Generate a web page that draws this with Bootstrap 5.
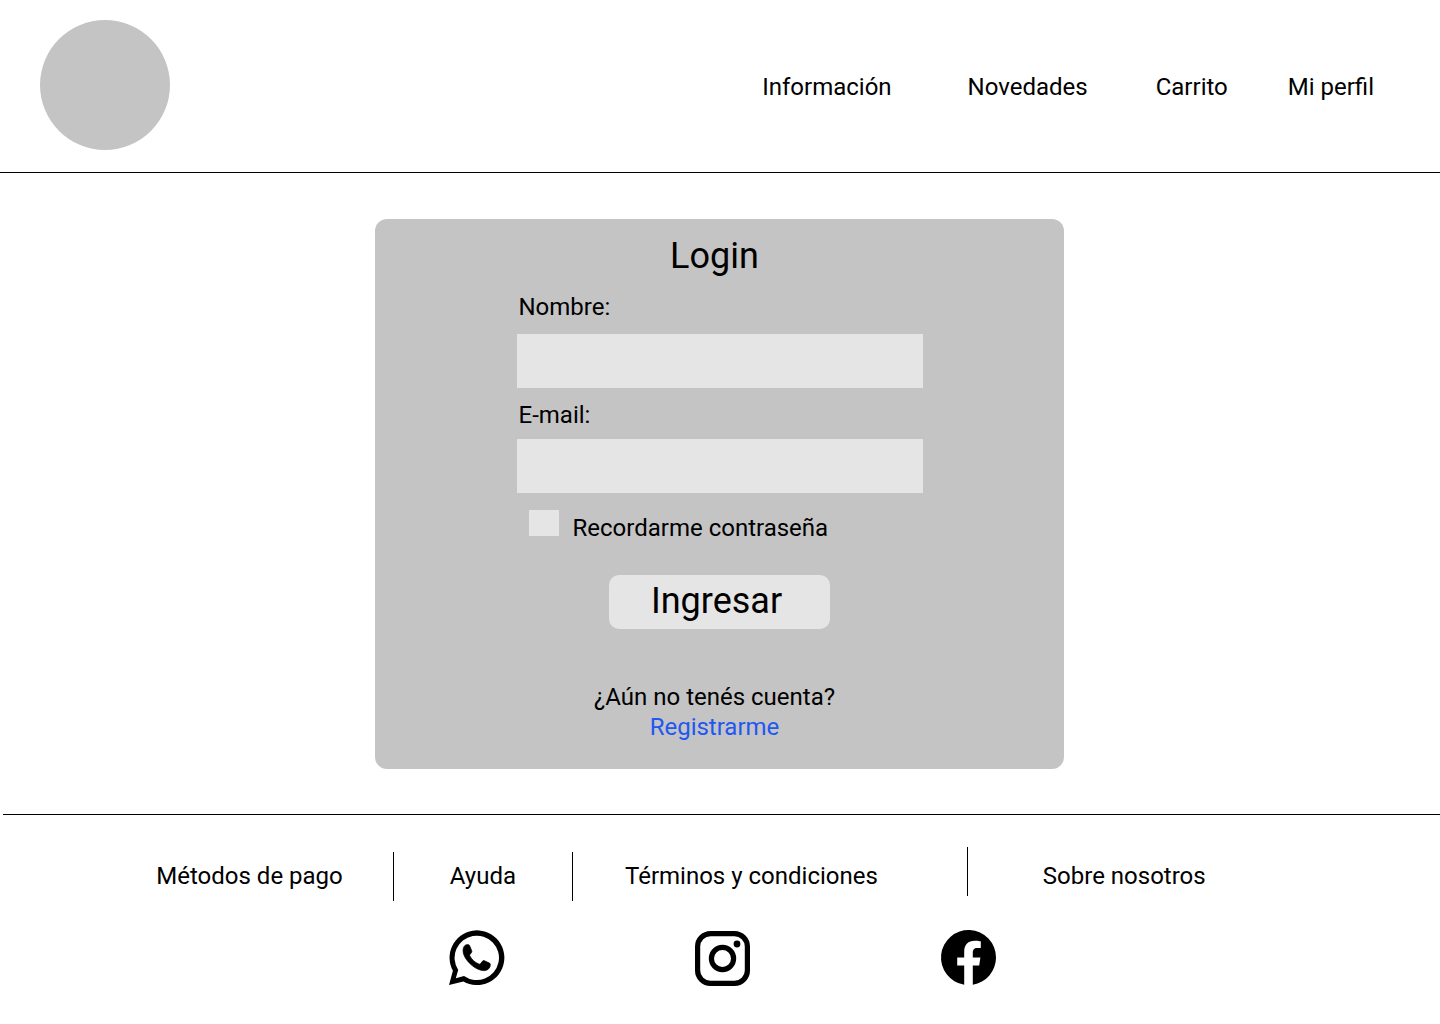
<!DOCTYPE html>
<html lang="es">
<head>
<meta charset="utf-8">
<meta name="viewport" content="width=device-width, initial-scale=1">
<title>Login</title>
<link href="https://cdn.jsdelivr.net/npm/bootstrap@5.3.0/dist/css/bootstrap.min.css" rel="stylesheet">
<style>
  body { font-family: Roboto, "Liberation Sans", sans-serif; font-size: 24px; line-height: 28px; color: #000; background: #fff; }
  a { color: #000; text-decoration: none; }
  .site-header { padding: 20px 66px 22px 40px; border-bottom: 1px solid #000; }
  .site-logo { width: 130px; height: 130px; background: #c4c4c4; }
  .site-nav { column-gap: 60px; row-gap: 8px; padding-top: 4px; }
  .login-area { padding: 46px 1px 45px 0; }
  .login-card { width: 100%; max-width: 689px; padding: 16px 0 27px; background: #c4c4c4; border-radius: 12px; }
  .login-form { width: 100%; max-width: 406px; }
  .big-text { font-size: 36px; line-height: 42px; font-weight: 400; }
  .shift-left { padding-right: 10px; }
  .field-name, .field-mail { padding-left: 2px; }
  .field-name { margin: 16px 0 13px; }
  .field-mail { margin: 13px 0 10px; }
  .field-box { height: 54px; background: #e5e5e5; border: 0; border-radius: 0; font-size: 24px; }
  .remember { gap: 14px; margin-top: 17px; padding-left: 12px; }
  .remember .form-check-input { width: 30px; height: 26px; margin: 0; border: 0; border-radius: 0; background-color: #e5e5e5; flex: none; }
  .remember .form-check-input:checked { background-color: #0d6efd; }
  .submit-btn { width: 221px; margin-top: 33px; padding: 5px 6px 7px 0; border: 0; border-radius: 10px; color: #000; background: #e5e5e5; }
  .submit-btn:hover { background: #d9d9d9; }
  .signup { margin-top: 53px; line-height: 30px; }
  .signup a { color: #2157f2; }
  .site-footer { margin-left: 3px; border-top: 1px solid #000; padding: 32px 0 38px; }
  .footer-nav { padding-right: 131px; }
  .footer-nav a { padding-top: 4px; margin: 0 50px; }
  .footer-nav a.short-link { margin: 0 56px; }
  .footer-nav a.long-link { margin: 0 89px 0 52px; }
  .footer-nav a.last-link { margin: 0 0 0 75px; }
  .footer-rule { width: 1px; height: 49px; background: #000; margin-top: 5px; }
  .footer-rule.raised { margin: 0 0 5px; }
  .social { gap: 191px; margin-top: 29px; padding-left: 2px; }
  .social svg { display: block; width: 55px; height: 55px; overflow: visible; }
</style>
<script src="https://cdn.jsdelivr.net/npm/bootstrap@5.3.0/dist/js/bootstrap.bundle.min.js"></script>
</head>
<body>
<header class="site-header d-flex flex-wrap align-items-center justify-content-between">
  <a href="#" class="site-logo rounded-circle" aria-label="Inicio"></a>
  <nav class="site-nav d-flex flex-wrap" aria-label="Principal">
    <a href="#" class="me-3">Información</a>
    <a href="#" class="me-2">Novedades</a>
    <a href="#">Carrito</a>
    <a href="#">Mi perfil</a>
  </nav>
</header>

<main class="login-area d-flex justify-content-center">
  <section class="login-card d-flex flex-column align-items-center">
    <h1 class="big-text shift-left m-0">Login</h1>
    <form class="login-form d-flex flex-column">
      <label for="nombre" class="field-name">Nombre:</label>
      <input type="text" id="nombre" class="form-control field-box">
      <label for="email" class="field-mail">E-mail:</label>
      <input type="email" id="email" class="form-control field-box">
      <div class="remember d-flex align-items-baseline">
        <input type="checkbox" id="recordar" class="form-check-input">
        <label for="recordar">Recordarme contraseña</label>
      </div>
      <button type="submit" class="btn submit-btn big-text align-self-center">Ingresar</button>
    </form>
    <p class="signup shift-left text-center mb-0">¿Aún no tenés cuenta?<br><a href="#">Registrarme</a></p>
  </section>
</main>

<footer class="site-footer">
  <nav class="footer-nav d-flex justify-content-center align-items-center" aria-label="Pie de página">
    <a href="#">Métodos de pago</a>
    <span class="footer-rule"></span>
    <a href="#" class="short-link">Ayuda</a>
    <span class="footer-rule"></span>
    <a href="#" class="long-link">Términos y condiciones</a>
    <span class="footer-rule raised"></span>
    <a href="#" class="last-link">Sobre nosotros</a>
  </nav>
  <div class="social d-flex justify-content-center">
    <a href="#" aria-label="WhatsApp">
      <svg viewBox="0 0 55 55" aria-hidden="true">
        <path fill-rule="evenodd" d="M0 55 3.900 40.800A27.400 27.400 0 1 1 14.400 51.500ZM6.800 48.200 15 46A22.200 22.200 0 1 0 9.200 40Z"/>
        <path stroke="#000" stroke-width=".8" stroke-linejoin="round" d="M18 14.700c-2.500 0-4 3-3.900 6.100.1 4.700 3.400 9.600 7.600 13.500 4.300 4 9.600 6.300 13.600 6.300 3.600 0 6-2.800 6-6 0-.7-.3-1.200-1-1.500l-5-2.400c-.8-.3-1.300-.2-1.800.5l-2 2.600c-.4.500-.9.600-1.600.3-4-1.700-6.900-4.300-9.100-8.200-.3-.6-.2-1 .2-1.500l1.600-2.100c.3-.5.3-1 .1-1.500l-2.100-5.100c-.3-.8-.8-1-1.500-1Z"/>
      </svg>
    </a>
    <a href="#" aria-label="Instagram">
      <svg viewBox="0 0 55 55" aria-hidden="true">
        <rect x="2.600" y="3.600" width="49.800" height="49.800" rx="13" fill="none" stroke="#000" stroke-width="5.200"/>
        <circle cx="27.500" cy="28.500" r="11.100" fill="none" stroke="#000" stroke-width="5.200"/>
        <circle cx="42" cy="14" r="3.400"/>
      </svg>
    </a>
    <a href="#" aria-label="Facebook">
      <svg viewBox="0 0 55 55" aria-hidden="true">
        <path d="M55 27.500A27.500 27.500 0 1 0 23.200 54.700V35.400H16.200V27.500H23.200V21.500C23.200 14.500 27.300 10.700 33.700 10.700 36 10.700 39.800 11.300 39.800 11.300V18H36.300C32.900 18 31.800 20.100 31.800 22.400V27.500H39.400L38.200 35.400H31.800V54.700A27.500 27.500 0 0 0 55 27.500Z"/>
      </svg>
    </a>
  </div>
</footer>
</body>
</html>
